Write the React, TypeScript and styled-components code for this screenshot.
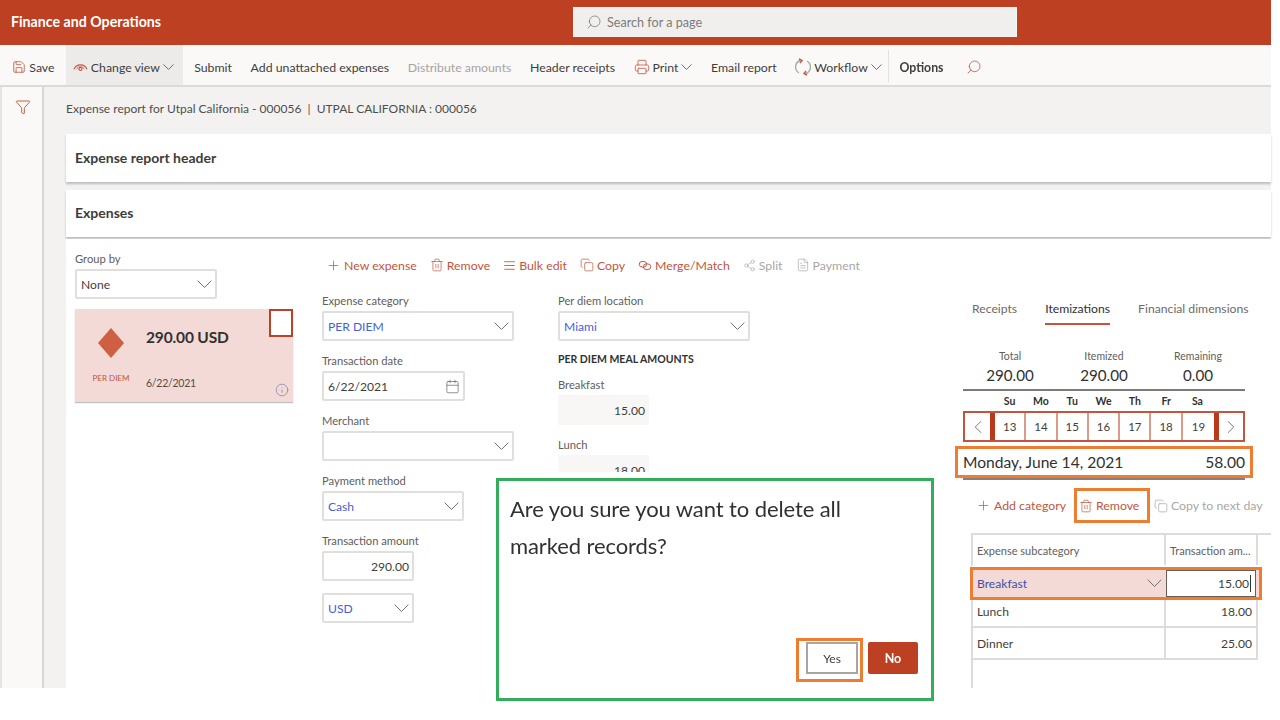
import { FC, ReactNode } from 'react';
import styled, { createGlobalStyle } from 'styled-components';
import { AlignJustify, Calendar, ChevronLeft, ChevronRight, Copy, Funnel, Info, Plus, Printer, Save, Search, Share2, Trash2, FileText } from 'lucide-react';

const red = '#bc4021';
const accent = '#c2553d';
const orange = '#ed7d31';

const GlobalStyle = createGlobalStyle`
  html, body { margin: 0; background: #fff; }
  body { font-family: Lato, "Open Sans", sans-serif; color: #323130; }
  * { box-sizing: border-box; }
`;

// the source picture is a soft, upscaled capture
const Page = styled.div`
  position: relative;
  width: 1271px;
  height: 720px;
  filter: blur(0.35px);
`;

const Shell = styled.div`
  height: 688px;
  display: flex;
  flex-direction: column;
`;

const Header = styled.header`
  height: 45px;
  background: ${red};
  display: flex;
  align-items: center;
  padding: 0 0 1px 11px;
  flex: none;
`;

const AppTitle = styled.div`
  width: 562px;
  padding-bottom: 2px;
  color: #fff;
  font-size: 14.2px;
  font-weight: 700;
`;

const SearchBox = styled.div`
  width: 444px;
  height: 30px;
  background: #f0efee;
  border: 1px solid #f7f4f2;
  display: flex;
  align-items: center;
  gap: 5px;
  padding-left: 12px;
  color: #7d7b79;
  font-size: 12.6px;
`;

const Toolbar = styled.nav`
  height: 42px;
  flex: none;
  background: #faf9f8;
  border-bottom: 2px solid #dcdad8;
  display: flex;
  align-items: center;
  padding-left: 3px;
`;

const ToolItem = styled.div<{ $muted?: boolean; $active?: boolean; $bold?: boolean }>`
  height: 40px;
  display: flex;
  align-items: center;
  gap: 3px;
  padding: 4px ${(p) => (p.$active ? '9px' : '9.3px')} 0 ${(p) => (p.$active ? '7px' : '9.3px')};
  margin: 0 ${(p) => (p.$active ? '2px' : '0')};
  font-size: 12.3px;
  font-weight: ${(p) => (p.$bold ? 700 : 400)};
  color: ${(p) => (p.$muted ? '#a6a4a2' : '#3f3e3d')};
  background: ${(p) => (p.$active ? '#edebe9' : 'transparent')};
  white-space: nowrap;
  svg { flex: none; }
`;

const ToolDivider = styled.div`
  width: 1px;
  height: 32px;
  background: #e3e1df;
  margin: 2px 1px 0 -3px;
`;

const FindButton = styled(ToolItem)`
  margin-left: 4px;
`;

const Body = styled.div`
  flex: 1;
  min-height: 0;
  display: flex;
`;

const Rail = styled.aside`
  width: 44px;
  flex: none;
  background: #faf9f8;
  border-left: 2px solid #e6e4e2;
  border-right: 2px solid #d8d6d4;
  padding: 12px 0 0 13px;
`;

const Content = styled.main`
  flex: 1;
  min-width: 0;
  background: #f3f2f1;
  padding-left: 22px;
  display: flex;
  flex-direction: column;
`;

const Crumb = styled.div`
  height: 47px;
  flex: none;
  display: flex;
  align-items: center;
  padding-bottom: 5px;
  font-size: 12px;
  color: #4f4e4d;
  white-space: pre;
`;

const SectionHead = styled.section<{ $h: number }>`
  height: ${(p) => p.$h}px;
  flex: none;
  background: #fff;
  display: flex;
  align-items: center;
  padding: 0 0 2px 9px;
  margin-bottom: 8px;
  box-shadow: 0 2px 2px rgba(0, 0, 0, 0.22);
  font-size: 14px;
  font-weight: 700;
  color: #3d3c3b;
`;

const ExpensePanel = styled.section`
  flex: 1;
  min-height: 0;
  margin-top: -6px;
  background: #fff;
  display: grid;
  grid-template-columns: 218px 623px 308px;
  column-gap: 29px;
  padding-left: 9px;
  overflow: hidden;
`;

const ListCol = styled.div`
  padding-top: 13px;
`;

const Label = styled.div`
  height: 17px;
  line-height: 14px;
  font-size: 11.2px;
  color: #605e5c;
  white-space: nowrap;
`;

const Box = styled.div<{ $w: number; $blue?: boolean; $right?: boolean }>`
  width: ${(p) => p.$w}px;
  height: 30px;
  border: 2px solid #e1dfdd;
  border-radius: 2px;
  background: #fff;
  display: flex;
  align-items: center;
  justify-content: ${(p) => (p.$right ? 'flex-end' : 'space-between')};
  padding: 0 3px 0 4px;
  font-size: 12.1px;
  color: ${(p) => (p.$blue ? '#3f62d8' : '#3f3e3d')};
  svg { flex: none; color: #6f6d6b; }
`;

const ExpenseCard = styled.div`
  position: relative;
  height: 93px;
  margin-top: 10px;
  background: #f3dad6;
  box-shadow: 0 1px 1px rgba(0, 0, 0, 0.25);
  display: grid;
  grid-template-columns: 71px 1fr;
`;

const CardCheck = styled.div`
  position: absolute;
  top: 0;
  right: 0;
  width: 24px;
  height: 28px;
  background: #fff;
  border: 2px solid #b8432b;
`;

const CardInfo = styled.div`
  position: absolute;
  right: 4px;
  bottom: 5px;
  color: #7c7bb0;
  display: flex;
`;

const CardBadge = styled.div`
  display: flex;
  flex-direction: column;
  align-items: center;
  padding: 19px 0 0 1px;
  gap: 15px;
  font-size: 8px;
  color: #c2553d;
  white-space: nowrap;
`;

const CardInfoText = styled.div`
  padding-top: 17px;
`;

const CardAmount = styled.div`
  font-size: 15.5px;
  font-weight: 700;
  letter-spacing: -0.15px;
  color: #323130;
  line-height: 22px;
`;

const CardDate = styled.div`
  margin-top: 29px;
  font-size: 10.5px;
  letter-spacing: -0.25px;
  color: #4f4e4d;
`;

const FormCol = styled.div`
  padding-top: 16px;
`;

const ActionBar = styled.div`
  display: flex;
  align-items: center;
  height: 20px;
  gap: 13px;
  padding-left: 4px;
  margin-bottom: 19px;
`;

const Action = styled.div<{ $muted?: boolean }>`
  display: flex;
  align-items: center;
  gap: 3px;
  font-size: 12.3px;
  color: ${(p) => (p.$muted ? '#a9a7a5' : accent)};
  white-space: nowrap;
`;

const FormGrid = styled.div`
  display: grid;
  grid-template-columns: 192px 192px;
  column-gap: 44px;
`;

const Field = styled.div<{ $h?: number }>`
  height: ${(p) => p.$h ?? 60}px;
`;

const MealTitle = styled.div`
  height: 34px;
  padding-top: 9px;
  font-size: 10.5px;
  font-weight: 700;
  color: #323130;
  white-space: nowrap;
`;

const ReadOnly = styled.div`
  width: 91px;
  height: 30px;
  background: #f8f7f6;
  display: flex;
  align-items: center;
  justify-content: flex-end;
  padding-right: 4px;
  font-size: 12.1px;
  color: #3f3e3d;
`;

const SideCol = styled.div`
  padding-top: 60px;
  margin-left: -11px;
`;

const Tabs = styled.div`
  display: flex;
  height: 26px;
  gap: 28px;
  padding-left: 9px;
`;

const Tab = styled.div<{ $on?: boolean }>`
  font-size: 12.2px;
  line-height: 20px;
  height: 26px;
  color: ${(p) => (p.$on ? '#323130' : '#6d6b69')};
  border-bottom: ${(p) => (p.$on ? `2px solid ${accent}` : 'none')};
  white-space: nowrap;
`;

const Totals = styled.div`
  display: grid;
  grid-template-columns: repeat(3, 94px);
  width: 282px;
  height: 39px;
  margin-top: 25px;
  border-bottom: 2px solid #7d7b79;
  text-align: center;
  box-sizing: content-box;
`;

const TotalLabel = styled.div`
  font-size: 10.5px;
  line-height: 13px;
  color: #605e5c;
`;

const TotalValue = styled.div`
  font-size: 15.2px;
  line-height: 24px;
  color: #323130;
`;

const WeekHead = styled.div`
  display: grid;
  grid-template-columns: 31px repeat(7, 31.3px);
  width: 282px;
  height: 20px;
  line-height: 20px;
  font-size: 10.5px;
  font-weight: 700;
  text-align: center;
  color: #323130;
`;

const WeekRow = styled.div`
  display: grid;
  grid-template-columns: 25px 5px repeat(7, 31.3px) 5px 1fr;
  width: 282px;
  height: 31px;
  border: 2px solid ${accent};
`;

const WeekArrow = styled.div`
  display: flex;
  align-items: center;
  justify-content: center;
  color: #6f6d6b;
`;

const WeekBar = styled.div`
  background: #b8391c;
`;

const WeekDay = styled.div`
  display: flex;
  align-items: center;
  justify-content: center;
  font-size: 11.5px;
  color: #3f3e3d;
  border-right: 2px solid #dc9a8b;
  &:nth-child(9) { border-right: none; }
`;

const DayRow = styled.div`
  width: 292px;
  height: 26px;
  margin: 7px 0 0 -5px;
  padding: 0 5px;
  display: flex;
  justify-content: space-between;
  align-items: center;
  font-size: 15.6px;
  color: #323130;
  outline: 3px solid ${orange};
  box-shadow: 0 10px 0 -5px #8c7f78;
`;

const SideActions = styled.div`
  display: flex;
  align-items: center;
  height: 29px;
  margin-top: 16px;
  padding-left: 13px;
  gap: 11px;
`;

const RemoveMark = styled.div`
  outline: 3px solid ${orange};
  height: 29px;
  width: 70px;
  padding-left: 2px;
  display: flex;
  align-items: center;
  margin-right: -4px;
`;

const SideTable = styled.div`
  margin-top: 13px;
  margin-left: 8px;
  width: 300px;
  border-top: 2px solid #dedcda;
`;

const Row = styled.div<{ $h: number; $sel?: boolean }>`
  display: grid;
  grid-template-columns: 193px 92px;
  width: 287px;
  height: ${(p) => p.$h}px;
  border-left: 2px solid #dedcda;
  border-bottom: 2px solid ${(p) => (p.$sel ? 'transparent' : '#dedcda')};
`;

const SelectedRow = styled.div`
  display: grid;
  grid-template-columns: 193px 93px;
  width: 286px;
  height: 27px;
  margin: 3px 0 0 2px;
  padding-bottom: 2px;
  background: #f3dad6;
  outline: 3px solid ${orange};
`;

const Cell = styled.div<{ $right?: boolean; $head?: boolean }>`
  display: flex;
  align-items: center;
  justify-content: ${(p) => (p.$right ? 'flex-end' : 'flex-start')};
  padding: 0 4px;
  border-right: 2px solid #dedcda;
  font-size: ${(p) => (p.$head ? '11px' : '12.1px')};
  color: ${(p) => (p.$head ? '#605e5c' : '#3f3e3d')};
  white-space: nowrap;
  overflow: hidden;
`;

const SubCategory = styled(Cell)`
  justify-content: space-between;
  color: #3f4fa8;
  border-right: none;
  svg { color: #6f6d6b; }
`;

const EditCell = styled(Cell)`
  background: #fff;
  border: 1px solid #6b5c58;
  height: 27px;
  margin-right: 3px;
`;

const Caret = styled.span`
  display: inline-block;
  width: 1px;
  height: 17px;
  margin-left: 1px;
  background: #323130;
`;

const EmptyRow = styled.div`
  height: 29px;
  width: 2px;
  background: #dedcda;
`;

const Dialog = styled.div`
  position: absolute;
  left: 496px;
  top: 478px;
  width: 438px;
  height: 223px;
  background: #fff;
  border: 3px solid #33ac5b;
  box-shadow: 0 -6px 0 #fff;
  padding: 9px 0 0 11px;
  display: flex;
  flex-direction: column;
  justify-content: space-between;
`;

const Question = styled.div`
  font-size: 22px;
  line-height: 37px;
  letter-spacing: -0.1px;
  color: #323130;
`;

const DialogButtons = styled.div`
  display: flex;
  justify-content: flex-end;
  align-items: flex-start;
  gap: 8px;
  padding: 0 13px 19px 0;
`;

const YesMark = styled.div`
  outline: 3px solid ${orange};
  padding: 1px 2px 5px 7px;
  display: flex;
`;

const YesButton = styled.button`
  width: 52px;
  height: 32px;
  background: #fff;
  border: 2px solid #a8a6a4;
  font: inherit;
  font-size: 12px;
  color: #3f3e3d;
`;

const NoButton = styled.button`
  width: 50px;
  height: 32px;
  margin-top: 1px;
  background: ${red};
  border: none;
  border-radius: 2px;
  font: inherit;
  font-size: 12.5px;
  font-weight: 700;
  color: #fff;
`;

const EyeIcon: FC = () => (
  <svg width="15" height="15" viewBox="0 0 16 16" fill="none" stroke={accent} strokeWidth="1.2">
    <path d="M1 10 A7.5 7.5 0 0 1 15 10" />
    <path d="M4 10 A4.2 4.2 0 0 1 12 10" stroke="#d99" />
    <circle cx="8" cy="9.5" r="1.6" />
  </svg>
);

const WorkflowIcon: FC = () => (
  <svg width="16" height="18" viewBox="0 0 16 18" fill="none" strokeWidth="1.4">
    <path d="M5 2.5 A7 7 0 0 0 4 15" stroke="#a9a7a5" />
    <path d="M11 15.5 A7 7 0 0 0 12 3" stroke="#a9a7a5" />
    <path d="M4 1 L7 2.5 L5 5" stroke={accent} />
    <path d="M12 17 L9 15.5 L11 13" stroke={accent} />
  </svg>
);

const MergeIcon: FC = () => (
  <svg width="14" height="11" viewBox="0 0 17 13" fill="none" stroke={accent} strokeWidth="1.2">
    <ellipse cx="6" cy="5" rx="4.6" ry="3.6" />
    <ellipse cx="11" cy="8" rx="4.6" ry="3.6" />
  </svg>
);

const Diamond: FC = () => (
  <svg width="26" height="30" viewBox="0 0 26 30">
    <path d="M13 0 L26 15 L13 30 L0 15 Z" fill="#cf5f43" />
  </svg>
);

// wide flat chevron, wider than the lucide one
const Chevron: FC<{ w?: number }> = ({ w = 11 }) => (
  <svg width={w} height={w * 0.56} viewBox="0 0 16 9" fill="none" stroke="#6f6d6b" strokeWidth={16 / w}>
    <path d="M0.7 0.7 L8 8 L15.3 0.7" />
  </svg>
);

const SelectBox: FC<{ w: number; blue?: boolean; children?: ReactNode }> = ({ w, blue, children }) => (
  <Box $w={w} $blue={blue}>
    <span>{children}</span>
    <Chevron w={15} />
  </Box>
);

const days = [
  ['Su', 13],
  ['Mo', 14],
  ['Tu', 15],
  ['We', 16],
  ['Th', 17],
  ['Fr', 18],
  ['Sa', 19],
] as const;

const totals = [
  ['Total', '290.00'],
  ['Itemized', '290.00'],
  ['Remaining', '0.00'],
];

export default function App() {
  return (
    <Page>
      <GlobalStyle />
      <Shell>
        <Header>
          <AppTitle>Finance and Operations</AppTitle>
          <SearchBox>
            <Search size={16} strokeWidth={1.2} style={{ transform: 'scaleX(-1)' }} />
            Search for a page
          </SearchBox>
        </Header>

        <Toolbar>
          <ToolItem><Save size={14} color={accent} strokeWidth={1.4} />Save</ToolItem>
          <ToolItem $active><EyeIcon />Change view<Chevron /></ToolItem>
          <ToolItem>Submit</ToolItem>
          <ToolItem>Add unattached expenses</ToolItem>
          <ToolItem $muted>Distribute amounts</ToolItem>
          <ToolItem>Header receipts</ToolItem>
          <ToolItem><Printer size={16} color={accent} strokeWidth={1.2} />Print<Chevron /></ToolItem>
          <ToolItem>Email report</ToolItem>
          <ToolItem><WorkflowIcon />Workflow<Chevron /></ToolItem>
          <ToolDivider />
          <ToolItem $bold>Options</ToolItem>
          <FindButton><Search size={16} color={accent} strokeWidth={1.2} style={{ transform: 'scaleX(-1)' }} /></FindButton>
        </Toolbar>

        <Body>
          <Rail><Funnel size={16} color={accent} strokeWidth={1.4} /></Rail>
          <Content>
            <Crumb>Expense report for Utpal California - 000056  |  UTPAL CALIFORNIA : 000056</Crumb>
            <SectionHead $h={48}>Expense report header</SectionHead>
            <SectionHead $h={47}>Expenses</SectionHead>

            <ExpensePanel>
              <ListCol>
                <Label>Group by</Label>
                <SelectBox w={142}>None</SelectBox>
                <ExpenseCard>
                  <CardCheck />
                  <CardBadge><Diamond />PER DIEM</CardBadge>
                  <CardInfoText>
                    <CardAmount>290.00 USD</CardAmount>
                    <CardDate>6/22/2021</CardDate>
                  </CardInfoText>
                  <CardInfo><Info size={14} strokeWidth={1.2} /></CardInfo>
                </ExpenseCard>
              </ListCol>

              <FormCol>
                <ActionBar>
                  <Action><Plus size={15} strokeWidth={1.2} />New expense</Action>
                  <Action><Trash2 size={14} strokeWidth={1.2} />Remove</Action>
                  <Action><AlignJustify size={13} strokeWidth={1.6} />Bulk edit</Action>
                  <Action><Copy size={14} strokeWidth={1.2} />Copy</Action>
                  <Action><MergeIcon />Merge/Match</Action>
                  <Action $muted><Share2 size={13} strokeWidth={1.2} />Split</Action>
                  <Action $muted><FileText size={14} strokeWidth={1.2} />Payment</Action>
                </ActionBar>
                <FormGrid>
                  <div>
                    <Field><Label>Expense category</Label><SelectBox w={192} blue>PER DIEM</SelectBox></Field>
                    <Field>
                      <Label>Transaction date</Label>
                      <Box $w={143}><span>6/22/2021</span><Calendar size={15} strokeWidth={1.2} /></Box>
                    </Field>
                    <Field><Label>Merchant</Label><SelectBox w={192} /></Field>
                    <Field><Label>Payment method</Label><SelectBox w={142} blue>Cash</SelectBox></Field>
                    <Field $h={59}>
                      <Label>Transaction amount</Label>
                      <Box $w={92} $right>290.00</Box>
                    </Field>
                    <SelectBox w={92} blue>USD</SelectBox>
                  </div>
                  <div>
                    <Field $h={50}><Label>Per diem location</Label><SelectBox w={192} blue>Miami</SelectBox></Field>
                    <MealTitle>PER DIEM MEAL AMOUNTS</MealTitle>
                    <Field><Label>Breakfast</Label><ReadOnly>15.00</ReadOnly></Field>
                    <Field><Label>Lunch</Label><ReadOnly>18.00</ReadOnly></Field>
                  </div>
                </FormGrid>
              </FormCol>

              <SideCol>
                <Tabs>
                  <Tab>Receipts</Tab>
                  <Tab $on>Itemizations</Tab>
                  <Tab>Financial dimensions</Tab>
                </Tabs>
                <Totals>
                  {totals.map(([label, value]) => (
                    <div key={label}>
                      <TotalLabel>{label}</TotalLabel>
                      <TotalValue>{value}</TotalValue>
                    </div>
                  ))}
                </Totals>
                <WeekHead>
                  <span />
                  {days.map(([d]) => <span key={d}>{d}</span>)}
                </WeekHead>
                <WeekRow>
                  <WeekArrow><ChevronLeft size={22} strokeWidth={1} /></WeekArrow>
                  <WeekBar />
                  {days.map(([d, n]) => <WeekDay key={d}>{n}</WeekDay>)}
                  <WeekBar />
                  <WeekArrow><ChevronRight size={22} strokeWidth={1} /></WeekArrow>
                </WeekRow>
                <DayRow><span>Monday, June 14, 2021</span><span>58.00</span></DayRow>
                <SideActions>
                  <Action><Plus size={15} strokeWidth={1.2} />Add category</Action>
                  <RemoveMark><Action><Trash2 size={14} strokeWidth={1.2} />Remove</Action></RemoveMark>
                  <Action $muted><Copy size={14} strokeWidth={1.2} />Copy to next day</Action>
                </SideActions>
                <SideTable>
                  <Row $h={32} $sel>
                    <Cell $head>Expense subcategory</Cell>
                    <Cell $head>Transaction am...</Cell>
                  </Row>
                  <SelectedRow>
                    <SubCategory>Breakfast<Chevron w={15} /></SubCategory>
                    <EditCell $right>15.00<Caret /></EditCell>
                  </SelectedRow>
                  <Row $h={31}>
                    <Cell>Lunch</Cell>
                    <Cell $right>18.00</Cell>
                  </Row>
                  <Row $h={32}>
                    <Cell>Dinner</Cell>
                    <Cell $right>25.00</Cell>
                  </Row>
                  <EmptyRow />
                </SideTable>
              </SideCol>
            </ExpensePanel>
          </Content>
        </Body>
      </Shell>

      <Dialog>
        <Question>Are you sure you want to delete all<br />marked records?</Question>
        <DialogButtons>
          <YesMark><YesButton>Yes</YesButton></YesMark>
          <NoButton>No</NoButton>
        </DialogButtons>
      </Dialog>
    </Page>
  );
}
